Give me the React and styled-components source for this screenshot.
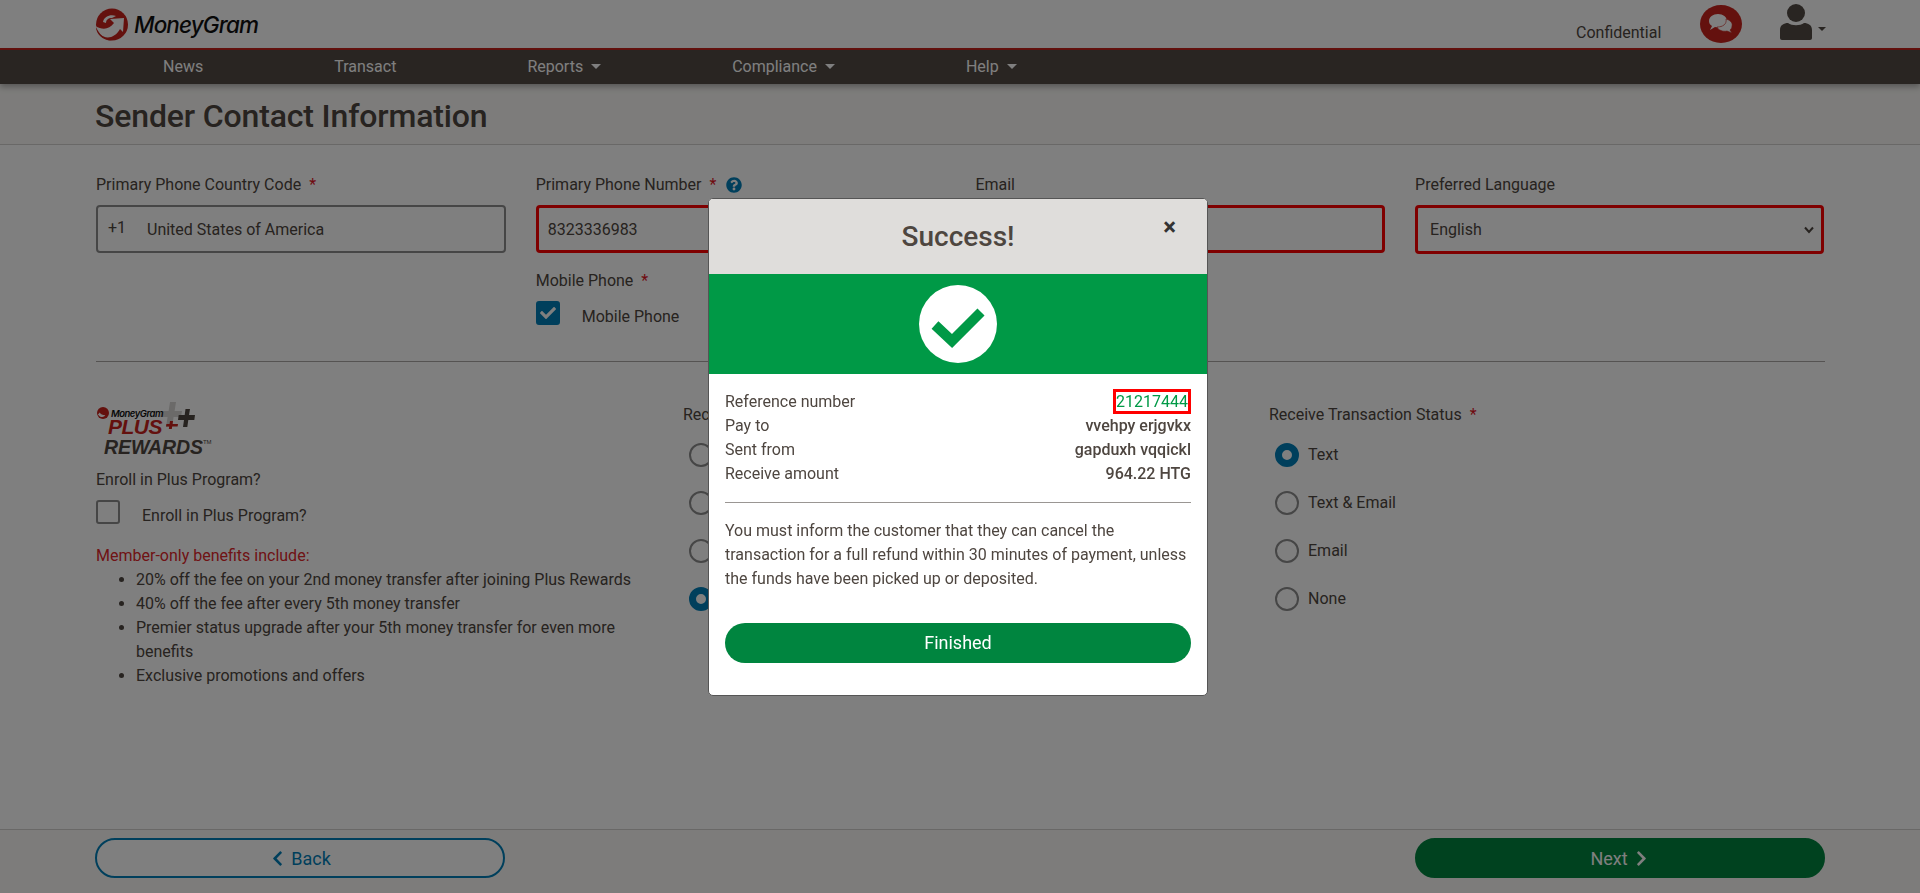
import React from "react";
import styled, { createGlobalStyle } from "styled-components";
import { FaChevronLeft, FaChevronRight, FaCheck, FaQuestionCircle } from "react-icons/fa";

const GlobalStyle = createGlobalStyle`
  * { box-sizing: border-box; }
  html, body { margin: 0; padding: 0; height: 100%; }
  body {
    font-family: Roboto, "Liberation Sans", sans-serif;
    font-size: 16px;
    line-height: 24px;
    color: #4e4640;
    background: #fff;
    overflow: hidden;
  }
`;

const Page = styled.div`
  height: 893px;
  display: flex;
  flex-direction: column;
`;

const TopBar = styled.header`
  height: 50px;
  padding: 0 94px 0 95px;
  display: flex;
  align-items: flex-start;
  justify-content: space-between;
  border-bottom: 2px solid #c8231c;
`;

const Logo = styled.div`
  display: flex;
  align-items: center;
  gap: 6px;
  height: 48px;
  padding-top: 1px;
`;

const LogoText = styled.span`
  font-family: Inter, Roboto, sans-serif;
  font-style: italic;
  font-weight: 500;
  font-size: 22.5px;
  letter-spacing: -0.9px;
  color: #111;
`;

const TopRight = styled.div`
  display: flex;
  align-items: flex-start;
`;

const Confidential = styled.span`
  margin-top: 21px;
  width: 124px;
  font-size: 16px;
`;

const ChatWrap = styled.div`
  margin-top: 5px;
`;

const UserWrap = styled.div`
  margin-left: 38px;
  margin-top: 4px;
  display: flex;
  align-items: flex-start;
  gap: 6px;
`;

const Caret = styled.span`
  display: inline-block;
  width: 0;
  height: 0;
  margin-top: -2px;
  border-top: 5px solid ${(p) => p.$color || "#fff"};
  border-left: 5px solid transparent;
  border-right: 5px solid transparent;
`;

const UserCaret = styled(Caret)`
  margin-top: 23px;
  border-top-width: 4px;
  border-left-width: 4px;
  border-right-width: 4px;
`;

const Nav = styled.nav`
  height: 34px;
  padding-left: 163px;
  background: #524a44;
  display: flex;
  align-items: center;
  gap: 131px;
  box-shadow: 0 3px 6px rgba(0, 0, 0, 0.3);
  position: relative;
`;

const NavItem = styled.a`
  color: #fff;
  font-size: 16px;
  display: flex;
  align-items: center;
  gap: 8px;
`;

const TitleBand = styled.div`
  height: 61px;
  padding: 4px 95px 0;
  background: #faf9f6;
  border-bottom: 1px solid #d3d1cf;
  display: flex;
  align-items: center;
`;

const Title = styled.h1`
  margin: 0;
  font-size: 32px;
  line-height: 40px;
  font-weight: 500;
  letter-spacing: -0.15px;
  color: #4e4640;
`;

const Content = styled.main`
  flex: 1;
  padding: 28px 95px 0 96px;
`;

const FourCols = styled.div`
  display: grid;
  grid-template-columns: repeat(3, 410px) 409px;
  column-gap: 29.7px;
`;

const Field = styled.div`
  display: flex;
  flex-direction: column;
`;

const Label = styled.label`
  display: flex;
  align-items: center;
  height: 24px;
  margin-bottom: 8px;
`;

const Star = styled.span`
  color: #e0141e;
  margin-left: 8px;
`;

const HelpIcon = styled(FaQuestionCircle)`
  color: #007fb8;
  margin-left: 10px;
  font-size: 16px;
`;

const Box = styled.div`
  height: 48px;
  border: ${(p) => (p.$error ? "3px solid #f00" : "2px solid #8c8c8c")};
  border-radius: 4px;
  padding: 2px ${(p) => (p.$error ? "9px" : "10px")} 0;
  display: flex;
  align-items: center;
  background: #fff;
`;

const SelectBox = styled(Box)`
  height: 49px;
  padding: 0 7px 0 12px;
  justify-content: space-between;
`;

const Prefix = styled.span`
  width: 39px;
  margin-top: -5px;
`;

const MobileField = styled.div`
  margin-top: 16px;
`;

const CheckRow = styled.div`
  display: flex;
  align-items: center;
  gap: 22px;
  height: 24px;
  & > span:last-child {
    position: relative;
    top: 4px;
  }
`;

const CheckBox = styled.span`
  width: 24px;
  height: 24px;
  border-radius: 3px;
  border: 2px solid ${(p) => (p.$checked ? "#007fb8" : "#8c8c8c")};
  background: ${(p) => (p.$checked ? "#007fb8" : "#fff")};
  color: #fff;
  font-size: 16px;
  display: flex;
  align-items: center;
  justify-content: center;
  flex: none;
`;

const Divider = styled.hr`
  margin: ${(p) => p.$gap || 36}px 0 0;
  border: 0;
  border-top: 1px solid ${(p) => p.$color || "#aaa7a4"};
`;

const ThreeCols = styled.div`
  display: grid;
  grid-template-columns: 557px 556px 556px;
  column-gap: 30px;
  margin-top: 42px;
`;

const PlusLogo = styled.div`
  position: relative;
  width: 118px;
  height: 50px;
  font-style: italic;
  font-weight: 700;
  font-family: "Liberation Sans", sans-serif;
`;

const PlusMg = styled.span`
  position: absolute;
  left: 15px;
  top: 3px;
  font-family: Inter, sans-serif;
  font-size: 9.5px;
  line-height: 14px;
  letter-spacing: -0.5px;
  font-weight: 600;
  color: #111;
`;

const PlusWord = styled.span`
  position: absolute;
  left: 12px;
  top: 12px;
  font-size: 21px;
  line-height: 22px;
  letter-spacing: -0.5px;
  color: #c8231c;
`;

const RewardsWord = styled.span`
  position: absolute;
  left: 8px;
  top: 27px;
  font-size: 19.5px;
  line-height: 22px;
  letter-spacing: -0.1px;
  white-space: nowrap;
  color: #4e4640;
`;

const Tm = styled.span`
  font-size: 6px;
  vertical-align: 10px;
  font-style: normal;
  font-weight: 400;
`;

const PlusDrawing = styled.svg`
  position: absolute;
  left: 64px;
  top: -2px;
`;

const MgDot = styled.svg`
  position: absolute;
  left: 1px;
  top: 3px;
`;

const EnrollLabel = styled.div`
  margin-top: 14px;
  height: 24px;
`;

const EnrollRow = styled(CheckRow)`
  margin-top: 8px;
`;

const MemberNote = styled.div`
  margin-top: 20px;
  color: #e0262b;
`;

const BenefitList = styled.ul`
  margin: 0;
  padding-left: 40px;
  width: 540px;
`;

const GroupLabel = styled.div`
  height: 24px;
  margin-top: -1px;
`;

const RadioGroup = styled.div`
  margin-top: 16px;
  padding-left: 6px;
  display: flex;
  flex-direction: column;
  gap: 24px;
`;

const RadioRow = styled.div`
  display: flex;
  align-items: center;
  gap: 9px;
  height: 24px;
`;

const Radio = styled.span`
  width: 24px;
  height: 24px;
  border-radius: 50%;
  flex: none;
  background: #fff;
  border: ${(p) => (p.$on ? "7px solid #007fb8" : "2px solid #8c8c8c")};
`;

const Footer = styled.footer`
  height: 64px;
  padding: 8px 95px 0;
  background: #faf9f6;
  border-top: 1px solid #d3d1cf;
  display: flex;
  justify-content: space-between;
`;

const FooterButton = styled.button`
  width: 410px;
  height: 40px;
  border-radius: 20px;
  font-family: inherit;
  font-size: 18px;
  border: 2px solid ${(p) => (p.$primary ? "#00853f" : "#007fb8")};
  background: ${(p) => (p.$primary ? "#00853f" : "#fff")};
  color: ${(p) => (p.$primary ? "#fff" : "#007fb8")};
  display: flex;
  align-items: center;
  justify-content: center;
  gap: 5px;
  svg {
    font-size: 17px;
  }
`;

const Overlay = styled.div`
  position: fixed;
  inset: 0;
  background: rgba(0, 0, 0, 0.5);
  display: flex;
  align-items: center;
  justify-content: center;
  padding-right: 4px;
`;

const Modal = styled.div`
  width: 500px;
  height: 498px;
  background: #fff;
  border-radius: 5px;
  border: 1px solid #555;
  overflow: hidden;
  display: flex;
  flex-direction: column;
`;

const ModalHeader = styled.div`
  height: 75px;
  padding-top: 2px;
  flex: none;
  background: #dfdddb;
  position: relative;
  display: flex;
  align-items: center;
  justify-content: center;
`;

const ModalTitle = styled.h2`
  margin: 0;
  font-size: 28px;
  line-height: 36px;
  font-weight: 500;
  color: #4e4640;
`;

const CloseButton = styled.span`
  position: absolute;
  right: 31px;
  top: 16px;
  font-size: 24px;
  line-height: 24px;
  font-weight: 700;
  color: #333;
`;

const SuccessBand = styled.div`
  height: 100px;
  flex: none;
  background: #009946;
  display: flex;
  align-items: center;
  justify-content: center;
`;

const SuccessCircle = styled.div`
  width: 78px;
  height: 78px;
  border-radius: 50%;
  background: #fff;
`;

const ModalBody = styled.div`
  padding: 16px 16px 0;
  display: flex;
  flex-direction: column;
`;

const InfoRow = styled.div`
  display: flex;
  justify-content: space-between;
  align-items: center;
  height: 24px;
`;

const InfoValue = styled.span`
  font-weight: 500;
`;

const RefValue = styled.span`
  color: #009946;
  border: 3px solid #f00;
  line-height: 19px;
`;

const ModalText = styled.p`
  margin: 16px 0 0;
`;

const FinishedButton = styled.button`
  margin-top: 32px;
  height: 40px;
  border: 0;
  border-radius: 20px;
  background: #00853f;
  color: #fff;
  font-family: inherit;
  font-size: 18px;
`;

function MoneyGramMark({ size = 33 }) {
  return (
    <svg width={size} height={size} viewBox="0 0 33 33">
      <circle cx="17" cy="16.5" r="16" fill="#c8231c" />
      <path d="M0.5 18 C3 31 18 34 25 21 L28 24 L29 10 L15 11 L19 15 C14 22 7 22 0.5 18 Z" fill="#fff" />
      <path d="M1 19 C1 26 8 33 17 32.5 C9 31 4 26 1 19 Z" fill="#c8231c" />
      <path d="M8 14 C9 8 16 6 21 8 L17 10 C13 10 11 12 11 15 Z" fill="#fff" />
    </svg>
  );
}

function ChatBadge() {
  return (
    <svg width="42" height="38" viewBox="0 0 42 38">
      <ellipse cx="21" cy="19" rx="21" ry="19" fill="#c8231c" />
      <path d="M18 9 c-5 0 -9 3 -9 7 c0 2 1 4 3 5 l-2 4 l5 -3 c5 1 11 -1 12 -6 c0 -4 -4 -7 -9 -7 Z" fill="#fff" />
      <path d="M26 14 c4 1 7 4 6 7 c0 2 -1 3 -2 4 l2 3 l-5 -2 c-4 1 -9 -1 -10 -4 c6 0 10 -3 9 -8 Z" fill="#fff" stroke="#c8231c" strokeWidth="0.6" />
    </svg>
  );
}

function UserIcon() {
  return (
    <svg width="32" height="37" viewBox="0 0 32 37">
      <ellipse cx="16" cy="9" rx="9" ry="9" fill="#524a44" />
      <path d="M0 34 V26 C0 21 4 19 8 19 C12 22 20 22 24 19 C28 19 32 21 32 26 V34 C32 36 30 36 29 36 H3 C2 36 0 36 0 34 Z" fill="#524a44" />
    </svg>
  );
}

function SuccessCheck() {
  return (
    <svg width="78" height="78" viewBox="0 0 78 78">
      <polyline points="16,40 33,56 62,27" fill="none" stroke="#009946" strokeWidth="10" />
    </svg>
  );
}

const statusOptions = ["Text", "Text & Email", "Email", "None"];

export default function App() {
  return (
    <>
      <GlobalStyle />
      <Page>
        <TopBar>
          <Logo>
            <MoneyGramMark />
            <LogoText>MoneyGram</LogoText>
          </Logo>
          <TopRight>
            <Confidential>Confidential</Confidential>
            <ChatWrap>
              <ChatBadge />
            </ChatWrap>
            <UserWrap>
              <UserIcon />
              <UserCaret $color="#524a44" />
            </UserWrap>
          </TopRight>
        </TopBar>
        <Nav>
          <NavItem>News</NavItem>
          <NavItem>Transact</NavItem>
          <NavItem>
            Reports <Caret />
          </NavItem>
          <NavItem>
            Compliance <Caret />
          </NavItem>
          <NavItem>
            Help <Caret />
          </NavItem>
        </Nav>
        <TitleBand>
          <Title>Sender Contact Information</Title>
        </TitleBand>
        <Content>
          <FourCols>
            <Field>
              <Label>
                Primary Phone Country Code<Star>*</Star>
              </Label>
              <Box>
                <Prefix>+1</Prefix>
                <span>United States of America</span>
              </Box>
            </Field>
            <Field>
              <Label>
                Primary Phone Number<Star>*</Star>
                <HelpIcon />
              </Label>
              <Box $error>8323336983</Box>
              <MobileField>
                <Label>
                  Mobile Phone<Star>*</Star>
                </Label>
                <CheckRow>
                  <CheckBox $checked>
                    <FaCheck />
                  </CheckBox>
                  <span>Mobile Phone</span>
                </CheckRow>
              </MobileField>
            </Field>
            <Field>
              <Label>Email</Label>
              <Box $error />
            </Field>
            <Field>
              <Label>Preferred Language</Label>
              <SelectBox $error>
                <span>English</span>
                <svg width="10" height="8" viewBox="0 0 10 8">
                  <path d="M1 1.5 L5 6 L9 1.5" fill="none" stroke="#4e4640" strokeWidth="2" />
                </svg>
              </SelectBox>
            </Field>
          </FourCols>
          <Divider />
          <ThreeCols>
            <div>
              <PlusLogo>
                <PlusDrawing width="40" height="34" viewBox="0 0 40 34">
                  <path d="M10 0 H16 L14.6 9 H22 L21 15 H13.6 L12 25 H6 L7.6 15 H0 L1 9 H8.6 Z" fill="#d6d4d2" />
                  <path d="M25.5 7 H30 L29 13 H35 L34.3 18 H28.3 L27.3 25 H23 L24 18 H18 L18.7 13 H24.7 Z" fill="#4e4640" />
                  <path d="M10 19 H13 L12.6 22 H18 L17.6 24.5 H12.2 L11.8 27 H8.8 L9.2 24.5 H6 L6.4 22 H9.6 Z" fill="#c8231c" />
                </PlusDrawing>
                <MgDot width="12" height="12" viewBox="0 0 13 13">
                  <circle cx="6.5" cy="6.5" r="6.5" fill="#c8231c" />
                  <path d="M1 8 C3 11 7 12 9 9 C6 9 4 8 3 6 Z" fill="#fff" />
                </MgDot>
                <PlusMg>MoneyGram</PlusMg>
                <PlusWord>PLUS</PlusWord>
                <RewardsWord>
                  REWARDS<Tm>TM</Tm>
                </RewardsWord>
              </PlusLogo>
              <EnrollLabel>Enroll in Plus Program?</EnrollLabel>
              <EnrollRow>
                <CheckBox />
                <span>Enroll in Plus Program?</span>
              </EnrollRow>
              <MemberNote>Member-only benefits include:</MemberNote>
              <BenefitList>
                <li>20% off the fee on your 2nd money transfer after joining Plus Rewards</li>
                <li>40% off the fee after every 5th money transfer</li>
                <li>Premier status upgrade after your 5th money transfer for even more benefits</li>
                <li>Exclusive promotions and offers</li>
              </BenefitList>
            </div>
            <div>
              <GroupLabel>Rec</GroupLabel>
              <RadioGroup>
                {statusOptions.map((opt) => (
                  <RadioRow key={opt}>
                    <Radio $on={opt === "None"} />
                  </RadioRow>
                ))}
              </RadioGroup>
            </div>
            <div>
              <GroupLabel>
                Receive Transaction Status<Star>*</Star>
              </GroupLabel>
              <RadioGroup>
                {statusOptions.map((opt) => (
                  <RadioRow key={opt}>
                    <Radio $on={opt === "Text"} />
                    <span>{opt}</span>
                  </RadioRow>
                ))}
              </RadioGroup>
            </div>
          </ThreeCols>
        </Content>
        <Footer>
          <FooterButton>
            <FaChevronLeft />
            Back
          </FooterButton>
          <FooterButton $primary>
            Next
            <FaChevronRight />
          </FooterButton>
        </Footer>
      </Page>
      <Overlay>
        <Modal>
          <ModalHeader>
            <ModalTitle>Success!</ModalTitle>
            <CloseButton>×</CloseButton>
          </ModalHeader>
          <SuccessBand>
            <SuccessCircle>
              <SuccessCheck />
            </SuccessCircle>
          </SuccessBand>
          <ModalBody>
            <InfoRow>
              Reference number
              <RefValue>21217444</RefValue>
            </InfoRow>
            <InfoRow>
              Pay to
              <InfoValue>vvehpy erjgvkx</InfoValue>
            </InfoRow>
            <InfoRow>
              Sent from
              <InfoValue>gapduxh vqqickl</InfoValue>
            </InfoRow>
            <InfoRow>
              Receive amount
              <InfoValue>964.22 HTG</InfoValue>
            </InfoRow>
            <Divider $color="#9a9693" $gap={16} />
            <ModalText>
              You must inform the customer that they can cancel the transaction for a full refund
              within 30 minutes of payment, unless the funds have been picked up or deposited.
            </ModalText>
            <FinishedButton>Finished</FinishedButton>
          </ModalBody>
        </Modal>
      </Overlay>
    </>
  );
}
